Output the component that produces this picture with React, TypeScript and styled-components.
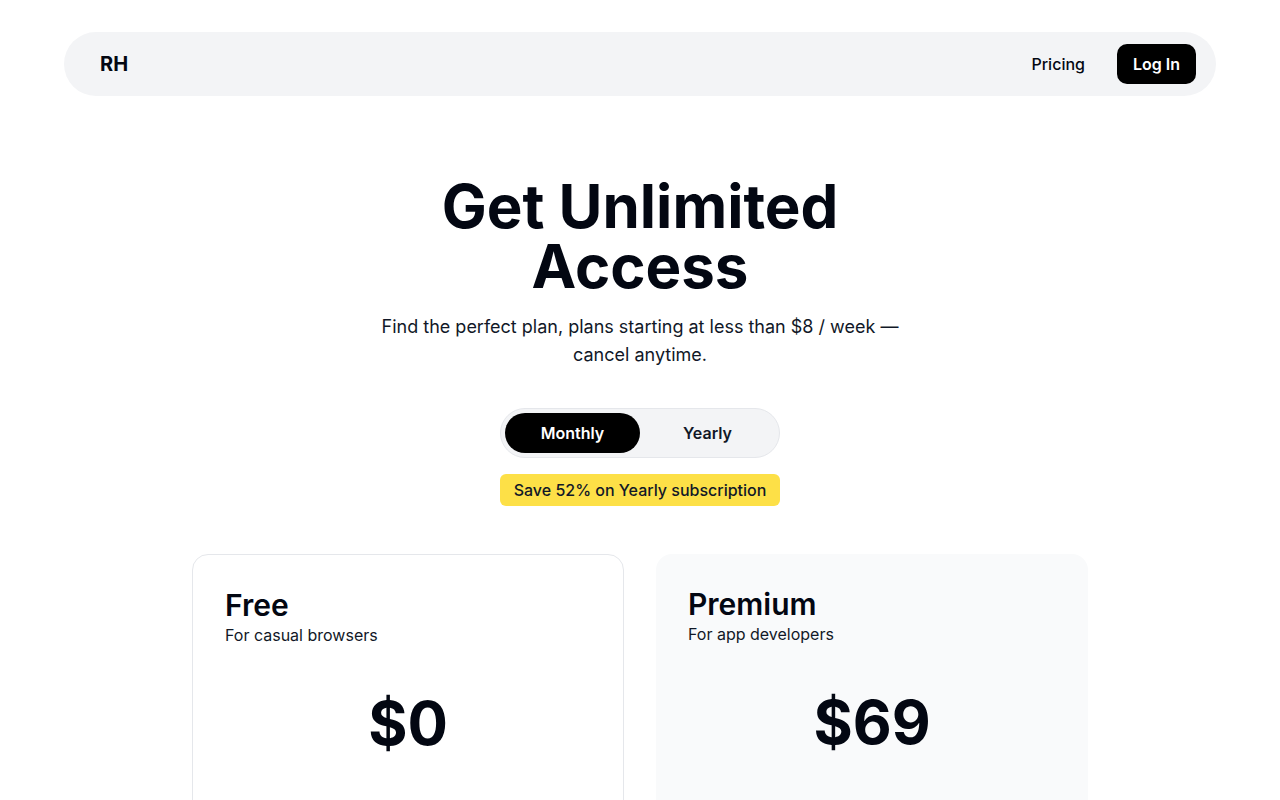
import styled, { createGlobalStyle } from "styled-components";
import { useState } from "react";

const GlobalStyle = createGlobalStyle`
  * { box-sizing: border-box; }
  body {
    margin: 0;
    background: #ffffff;
    color: #030712;
    font-family: Inter, "Noto Sans", sans-serif;
  }
`;

const Page = styled.div`
  display: flex;
  flex-direction: column;
  align-items: center;
  padding: 32px 64px 64px;
`;

const Nav = styled.nav`
  width: 100%;
  height: 64px;
  display: flex;
  align-items: center;
  justify-content: space-between;
  padding: 0 20px;
  background: #f3f4f6;
  border-radius: 32px;
`;

const Logo = styled.div`
  padding: 0 16px;
  font-size: 20px;
  font-weight: 700;
  color: #030712;
`;

const NavLinks = styled.div`
  display: flex;
  align-items: center;
  gap: 16px;
`;

const NavLink = styled.a`
  padding: 0 16px;
  font-size: 16px;
  font-weight: 500;
  color: #030712;
  text-decoration: none;
  cursor: pointer;
`;

const LoginButton = styled.button`
  height: 40px;
  padding: 0 16px;
  border: none;
  border-radius: 10px;
  background: #000;
  color: #fff;
  font-family: inherit;
  font-size: 16px;
  font-weight: 600;
  cursor: pointer;
`;

const Hero = styled.section`
  max-width: 576px;
  margin-top: 80px;
  text-align: center;
`;

const Title = styled.h1`
  margin: 0;
  font-size: 60px;
  line-height: 60px;
  font-weight: 700;
  color: #030712;
`;

const Subtitle = styled.p`
  margin: 17px 0 0;
  font-size: 18px;
  line-height: 28px;
  color: #111827;
`;

const Toggle = styled.div`
  margin-top: 39px;
  display: flex;
  padding: 4px;
  background: #f3f4f6;
  border: 1px solid #e5e7eb;
  border-radius: 999px;
`;

const ToggleOption = styled.button<{ $active: boolean }>`
  width: 135px;
  height: 40px;
  border: none;
  border-radius: 999px;
  background: ${(p) => (p.$active ? "#000" : "transparent")};
  color: ${(p) => (p.$active ? "#fff" : "#111827")};
  font-family: inherit;
  font-size: 16px;
  font-weight: 600;
  cursor: pointer;
`;

const SaveBadge = styled.div`
  margin-top: 16px;
  height: 32px;
  padding: 0 14px;
  display: flex;
  align-items: center;
  background: #fde047;
  border-radius: 6px;
  font-size: 16px;
  font-weight: 500;
  color: #111827;
`;

const Plans = styled.div`
  margin-top: 48px;
  width: 100%;
  max-width: 896px;
  display: grid;
  grid-template-columns: 1fr 1fr;
  gap: 32px;
`;

const PlanCard = styled.div<{ $featured?: boolean }>`
  min-height: 420px;
  padding: 32px;
  border-radius: 16px;
  border: ${(p) => (p.$featured ? "none" : "1px solid #e5e7eb")};
  background: ${(p) => (p.$featured ? "#f9fafb" : "#ffffff")};
  display: flex;
  flex-direction: column;
`;

const PlanName = styled.h2`
  margin: 0;
  font-size: 30px;
  line-height: 36px;
  font-weight: 600;
  color: #030712;
`;

const PlanFor = styled.p`
  margin: 0;
  font-size: 16px;
  line-height: 24px;
  color: #111827;
`;

const Price = styled.div`
  margin-top: 46px;
  text-align: center;
  font-size: 60px;
  line-height: 60px;
  font-weight: 700;
  color: #030712;
`;

const plans = [
  { name: "Free", audience: "For casual browsers", monthly: "$0", yearly: "$0" },
  { name: "Premium", audience: "For app developers", monthly: "$69", yearly: "$399", featured: true },
];

export default function App() {
  const [billing, setBilling] = useState<"monthly" | "yearly">("monthly");

  return (
    <>
      <GlobalStyle />
      <Page>
        <Nav>
          <Logo>RH</Logo>
          <NavLinks>
            <NavLink>Pricing</NavLink>
            <LoginButton>Log In</LoginButton>
          </NavLinks>
        </Nav>

        <Hero>
          <Title>Get Unlimited Access</Title>
          <Subtitle>
            Find the perfect plan, plans starting at less than $8 / week — cancel anytime.
          </Subtitle>
        </Hero>

        <Toggle>
          <ToggleOption $active={billing === "monthly"} onClick={() => setBilling("monthly")}>
            Monthly
          </ToggleOption>
          <ToggleOption $active={billing === "yearly"} onClick={() => setBilling("yearly")}>
            Yearly
          </ToggleOption>
        </Toggle>
        <SaveBadge>Save 52% on Yearly subscription</SaveBadge>

        <Plans>
          {plans.map((plan) => (
            <PlanCard key={plan.name} $featured={plan.featured}>
              <PlanName>{plan.name}</PlanName>
              <PlanFor>{plan.audience}</PlanFor>
              <Price>{billing === "monthly" ? plan.monthly : plan.yearly}</Price>
            </PlanCard>
          ))}
        </Plans>
      </Page>
    </>
  );
}
